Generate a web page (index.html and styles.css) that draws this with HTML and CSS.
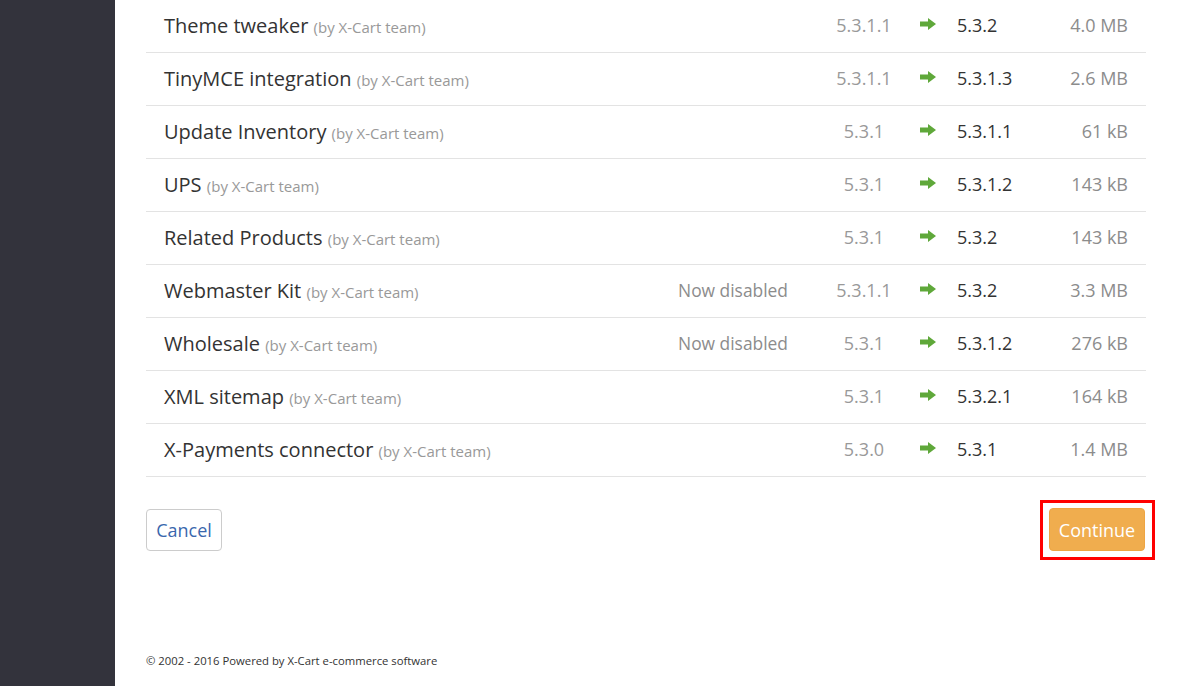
FILE: index.html
```html
<!DOCTYPE html>
<html>
<head>
<meta charset="utf-8">
<link rel="stylesheet" href="styles.css">
</head>
<body>
<div class="layout">
  <aside class="sidebar"></aside>
  <main class="main">
    <div class="table">
      <div class="row"><div class="name">Theme tweaker <span class="by">(by X-Cart team)</span></div><div class="status"></div><div class="old">5.3.1.1</div><div class="arrow"><svg viewBox="0 0 16 12" width="16" height="12"><path d="M0 3.5h8V0l8 6-8 6V8.5H0z" fill="#5fa83a"/></svg></div><div class="new">5.3.2</div><div class="size">4.0 MB</div></div>
      <div class="row"><div class="name">TinyMCE integration <span class="by">(by X-Cart team)</span></div><div class="status"></div><div class="old">5.3.1.1</div><div class="arrow"><svg viewBox="0 0 16 12" width="16" height="12"><path d="M0 3.5h8V0l8 6-8 6V8.5H0z" fill="#5fa83a"/></svg></div><div class="new">5.3.1.3</div><div class="size">2.6 MB</div></div>
      <div class="row"><div class="name">Update Inventory <span class="by">(by X-Cart team)</span></div><div class="status"></div><div class="old">5.3.1</div><div class="arrow"><svg viewBox="0 0 16 12" width="16" height="12"><path d="M0 3.5h8V0l8 6-8 6V8.5H0z" fill="#5fa83a"/></svg></div><div class="new">5.3.1.1</div><div class="size">61 kB</div></div>
      <div class="row"><div class="name">UPS <span class="by">(by X-Cart team)</span></div><div class="status"></div><div class="old">5.3.1</div><div class="arrow"><svg viewBox="0 0 16 12" width="16" height="12"><path d="M0 3.5h8V0l8 6-8 6V8.5H0z" fill="#5fa83a"/></svg></div><div class="new">5.3.1.2</div><div class="size">143 kB</div></div>
      <div class="row"><div class="name">Related Products <span class="by">(by X-Cart team)</span></div><div class="status"></div><div class="old">5.3.1</div><div class="arrow"><svg viewBox="0 0 16 12" width="16" height="12"><path d="M0 3.5h8V0l8 6-8 6V8.5H0z" fill="#5fa83a"/></svg></div><div class="new">5.3.2</div><div class="size">143 kB</div></div>
      <div class="row"><div class="name">Webmaster Kit <span class="by">(by X-Cart team)</span></div><div class="status">Now disabled</div><div class="old">5.3.1.1</div><div class="arrow"><svg viewBox="0 0 16 12" width="16" height="12"><path d="M0 3.5h8V0l8 6-8 6V8.5H0z" fill="#5fa83a"/></svg></div><div class="new">5.3.2</div><div class="size">3.3 MB</div></div>
      <div class="row"><div class="name">Wholesale <span class="by">(by X-Cart team)</span></div><div class="status">Now disabled</div><div class="old">5.3.1</div><div class="arrow"><svg viewBox="0 0 16 12" width="16" height="12"><path d="M0 3.5h8V0l8 6-8 6V8.5H0z" fill="#5fa83a"/></svg></div><div class="new">5.3.1.2</div><div class="size">276 kB</div></div>
      <div class="row"><div class="name">XML sitemap <span class="by">(by X-Cart team)</span></div><div class="status"></div><div class="old">5.3.1</div><div class="arrow"><svg viewBox="0 0 16 12" width="16" height="12"><path d="M0 3.5h8V0l8 6-8 6V8.5H0z" fill="#5fa83a"/></svg></div><div class="new">5.3.2.1</div><div class="size">164 kB</div></div>
      <div class="row"><div class="name">X-Payments connector <span class="by">(by X-Cart team)</span></div><div class="status"></div><div class="old">5.3.0</div><div class="arrow"><svg viewBox="0 0 16 12" width="16" height="12"><path d="M0 3.5h8V0l8 6-8 6V8.5H0z" fill="#5fa83a"/></svg></div><div class="new">5.3.1</div><div class="size">1.4 MB</div></div>
    </div>
    <div class="actions">
      <button class="btn btn-cancel">Cancel</button>
      <div class="highlight"><button class="btn btn-continue">Continue</button></div>
    </div>
    <footer class="footer">© 2002 - 2016 Powered by X-Cart e-commerce software</footer>
  </main>
</div>
</body>
</html>
```
FILE: styles.css
```css
html, body {
  margin: 0;
  padding: 0;
  background: #fff;
  font-family: "Open Sans", "Liberation Sans", sans-serif;
  color: #333;
}
.layout {
  display: flex;
  min-height: 686px;
}
.sidebar {
  width: 115px;
  flex: none;
  background: #33333c;
}
.main {
  flex: 1;
  padding-left: 31px;
  display: flex;
  flex-direction: column;
}
.table {
  width: 1000px;
}
.row {
  display: grid;
  grid-template-columns: 1fr 140px 126px 43px 100px 71px;
  align-items: center;
  height: 50px;
  padding: 0 18px 2px;
  border-bottom: 1px solid #e3e3e3;
}
.name {
  font-size: 20px;
  color: #333;
  white-space: nowrap;
}
.by {
  font-size: 15px;
  color: #999;
}
.status {
  text-align: right;
  font-size: 17.4px;
  color: #8c8c8c;
}
.old {
  padding-left: 26px;
  text-align: center;
  font-size: 18px;
  color: #999;
}
.arrow {
  padding-left: 6px;
  display: flex;
  align-items: center;
  position: relative;
  top: -1px;
}
.new {
  font-size: 18px;
  color: #333;
}
.size {
  text-align: right;
  font-size: 18px;
  color: #8c8c8c;
}
.actions {
  width: 1000px;
  display: flex;
  justify-content: space-between;
  align-items: flex-start;
  margin-top: 23px;
}
.btn {
  font-family: "Open Sans", "Liberation Sans", sans-serif;
  font-size: 18px;
  border-radius: 4px;
  height: 42px;
  cursor: pointer;
}
.btn-cancel {
  background: #fff;
  border: 1px solid #ccc;
  color: #3a67ad;
  width: 76px;
  padding: 0;
  margin-top: 9px;
}
.highlight {
  border: 3px solid #f00;
  padding: 5px 7px 6px 6px;
  margin-right: -9px;
}
.btn-continue {
  display: block;
  background: #f0ad4e;
  border: 1px solid #eea543;
  color: #fff;
  width: 96px;
  padding: 0;
  height: 43px;
}
.footer {
  margin-top: 93px;
  font-size: 11.3px;
  color: #333;
}
```
